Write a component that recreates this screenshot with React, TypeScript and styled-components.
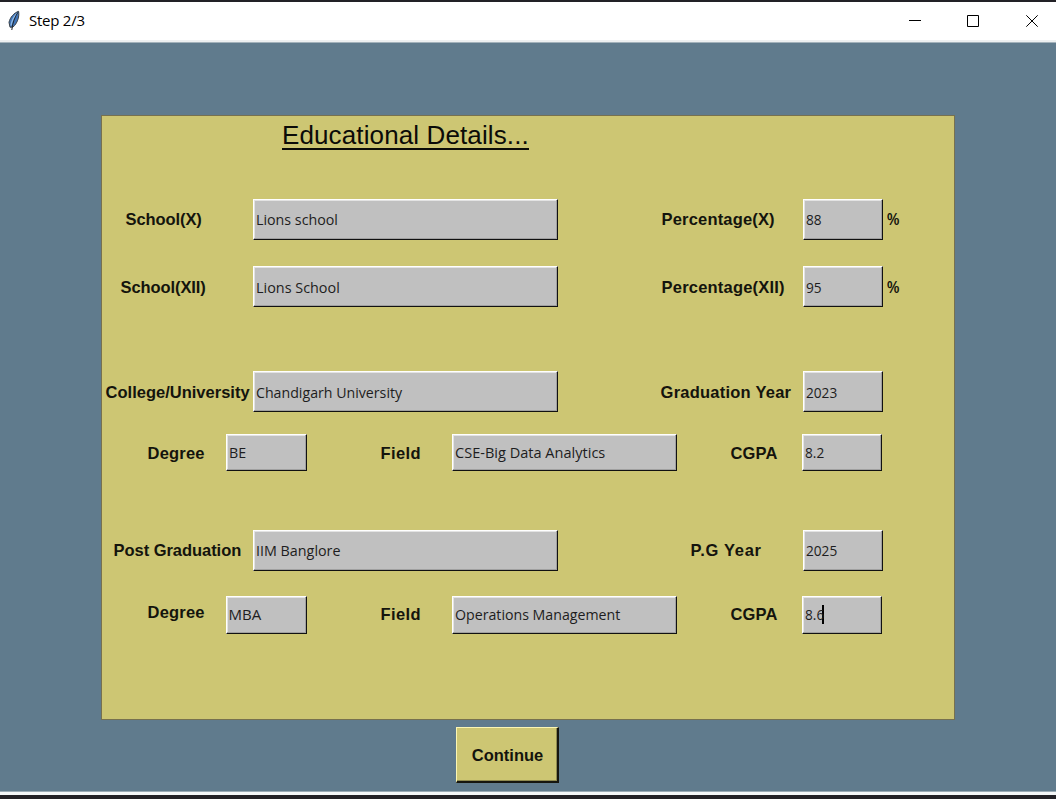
import React from "react";
import styled, { createGlobalStyle } from "styled-components";

const GlobalStyle = createGlobalStyle`
  * { box-sizing: border-box; }
  body { margin: 0; background: #222126; }
`;

const Window = styled.div`
  width: 1056px;
  height: 799px;
  display: flex;
  flex-direction: column;
  overflow: hidden;
  background: #222126;
  padding: 2px 0 4px;
`;

const TitleBar = styled.header`
  height: 40px;
  flex: none;
  display: flex;
  align-items: center;
  background: #fff;
  border-bottom: 2px solid #edf0f1;
  padding-left: 6px;
`;

const Title = styled.span`
  flex: 1;
  margin-left: 7px;
  padding-bottom: 2px;
  font: 15px/20px "Open Sans", "Noto Sans", sans-serif;
  letter-spacing: -0.25px;
  color: #000;
`;

const Controls = styled.div`
  display: flex;
  height: 100%;
  & > svg { display: block; }
`;

const Body = styled.main`
  flex: 1;
  display: flex;
  flex-direction: column;
  background: #607b8d;
  border-top: 1px solid #a3b2bb;
  border-bottom: 3px solid #f4f7f8;
  box-shadow: inset 0 -1px 0 #9aabb5;
  padding: 72px 0 0 101px;
`;

const Card = styled.section`
  width: 854px;
  height: 605px;
  flex: none;
  background: #cdc673;
  border: 1px solid #77714f;
`;

const Heading = styled.h1`
  margin: 4px 0 0 180px;
  height: 31px;
  font: 26px/30px "Liberation Sans", Arial, sans-serif;
  letter-spacing: 0.12px;
  color: #0b0b08;
  & > span {
    display: inline-block;
    height: 30px;
    border-bottom: 2px solid #0b0b08;
  }
`;

const Row = styled.div<{ $h: number; $top: number }>`
  display: flex;
  align-items: center;
  height: ${(p) => p.$h}px;
  margin-top: ${(p) => p.$top}px;
`;

const Label = styled.label<{ $left: number; $w: number; $track?: number; $lift?: number }>`
  flex: none;
  margin-left: ${(p) => p.$left}px;
  width: ${(p) => p.$w}px;
  padding-left: 0.6px;
  padding-bottom: ${(p) => p.$lift ?? 0}px;
  font: bold 16.5px/20px "Liberation Sans", Arial, sans-serif;
  letter-spacing: ${(p) => p.$track ?? 0}px;
  white-space: nowrap;
  color: #14140d;
`;

const Entry = styled.div<{ $w: number; $lift?: number }>`
  flex: none;
  width: ${(p) => p.$w}px;
  height: 100%;
  display: flex;
  align-items: center;
  padding-left: 1.5px;
  padding-bottom: ${(p) => p.$lift ?? 0}px;
  background: #c0c0c0;
  border: 1px solid;
  border-color: #fff #111 #111 #fff;
  box-shadow: inset -1px -1px 0 #a0a0a0, inset 1px 1px 0 #e3e3e3;
`;

const Value = styled.span<{ $scale?: number }>`
  font: 15px/20px "Open Sans", "Noto Sans", sans-serif;
  white-space: nowrap;
  color: #1d1d20;
  transform: scaleX(${(p) => p.$scale ?? 0.95});
  transform-origin: left;
`;

const Caret = styled.i`
  width: 2px;
  height: 19px;
  margin-left: -4px;
  background: #000;
`;

const Percent = styled.span<{ $lift?: number }>`
  margin-left: 4px;
  padding-bottom: ${(p) => p.$lift ?? 0}px;
  font: bold 16.5px/20px "Liberation Sans", Arial, sans-serif;
  color: #14140d;
  transform: scaleX(0.84);
  transform-origin: left;
`;

const Continue = styled.button`
  width: 103px;
  height: 56px;
  margin: 7px 0 0 355px;
  padding: 0 0 0 1px;
  background: #cdc673;
  border: 1px solid;
  border-color: #fbf6b4 #16160f #16160f #fbf6b4;
  border-right-width: 2px;
  border-bottom-width: 2px;
  box-shadow: inset -1px -1px 0 #8f8a50;
  font: bold 16.5px/20px "Liberation Sans", Arial, sans-serif;
  color: #14140d;
`;

const Feather = () => (
  <svg width="16" height="22" viewBox="0 0 16 22">
    <path d="M12.6 1.3C8 2.8 4 7.500 3 12.300L4 17.200L7 17.100C11 13.500 13.600 7.500 12.600 1.300Z" fill="#3f74b8" stroke="#3a4148" strokeWidth="1" />
    <path d="M11 3.500C8 6.500 5.800 10.500 5 15.500" stroke="#8fb9e6" strokeWidth="1.300" fill="none" />
    <path d="M11.800 2.500C8.800 7 6.500 13 5.800 20" stroke="#20242a" strokeWidth="1" fill="none" />
  </svg>
);

export default function App() {
  return (
    <>
      <GlobalStyle />
      <Window>
        <TitleBar>
          <Feather />
          <Title>Step 2/3</Title>
          <Controls>
            <svg width="160" height="38" viewBox="0 0 160 38" fill="none" stroke="#000">
              <path d="M13 18.500H25M71.500 13.500H82.500V24.500H71.500ZM130.300 13.300L141.700 24.700M141.700 13.300L130.300 24.700" />
            </svg>
          </Controls>
        </TitleBar>
        <Body>
          <Card>
            <Heading><span>Educational Details...</span></Heading>

            <Row $h={41} $top={48}>
              <Label $left={23} $w={128} $track={-0.1} $lift={2}>School(X)</Label>
              <Entry $w={305} $lift={1}><Value>Lions school</Value></Entry>
              <Label $left={103} $w={142} $track={0.17} $lift={2}>Percentage(X)</Label>
              <Entry $w={80} $lift={1}><Value $scale={0.91}>88</Value></Entry>
              <Percent $lift={2}>%</Percent>
            </Row>
            <Row $h={41} $top={26}>
              <Label $left={18} $w={133} $track={-0.1}>School(XII)</Label>
              <Entry $w={305}><Value $scale={0.96}>Lions School</Value></Entry>
              <Label $left={103} $w={142} $track={0.2}>Percentage(XII)</Label>
              <Entry $w={80}><Value $scale={0.91}>95</Value></Entry>
              <Percent>%</Percent>
            </Row>

            <Row $h={41} $top={64}>
              <Label $left={3} $w={148}>College/University</Label>
              <Entry $w={305}><Value $scale={0.945}>Chandigarh University</Value></Entry>
              <Label $left={102} $w={143} $track={0.23}>Graduation Year</Label>
              <Entry $w={80}><Value $scale={0.91}>2023</Value></Entry>
            </Row>
            <Row $h={37} $top={22}>
              <Label $left={45} $w={79} $track={0.2}>Degree</Label>
              <Entry $w={81} $lift={1}><Value>BE</Value></Entry>
              <Label $left={73} $w={72} $track={0.35}>Field</Label>
              <Entry $w={225} $lift={1}><Value $scale={0.97}>CSE-Big Data Analytics</Value></Entry>
              <Label $left={53} $w={72} $track={0.1}>CGPA</Label>
              <Entry $w={80} $lift={1}><Value $scale={0.91}>8.2</Value></Entry>
            </Row>

            <Row $h={41} $top={59}>
              <Label $left={11} $w={140} $track={-0.05} $lift={2}>Post Graduation</Label>
              <Entry $w={305} $lift={1}><Value $scale={0.955}>IIM Banglore</Value></Entry>
              <Label $left={132} $w={113} $track={0.7} $lift={2}>P.G Year</Label>
              <Entry $w={80} $lift={1}><Value $scale={0.91}>2025</Value></Entry>
            </Row>
            <Row $h={38} $top={25}>
              <Label $left={45} $w={79} $track={0.2} $lift={7}>Degree</Label>
              <Entry $w={81} $lift={2}><Value $scale={1}>MBA</Value></Entry>
              <Label $left={73} $w={72} $track={0.35} $lift={2}>Field</Label>
              <Entry $w={225} $lift={2}><Value $scale={0.945}>Operations Management</Value></Entry>
              <Label $left={53} $w={72} $track={0.1} $lift={2}>CGPA</Label>
              <Entry $w={80} $lift={2}><Value $scale={0.91}>8.6</Value><Caret /></Entry>
            </Row>
          </Card>
          <Continue>Continue</Continue>
        </Body>
      </Window>
    </>
  );
}
